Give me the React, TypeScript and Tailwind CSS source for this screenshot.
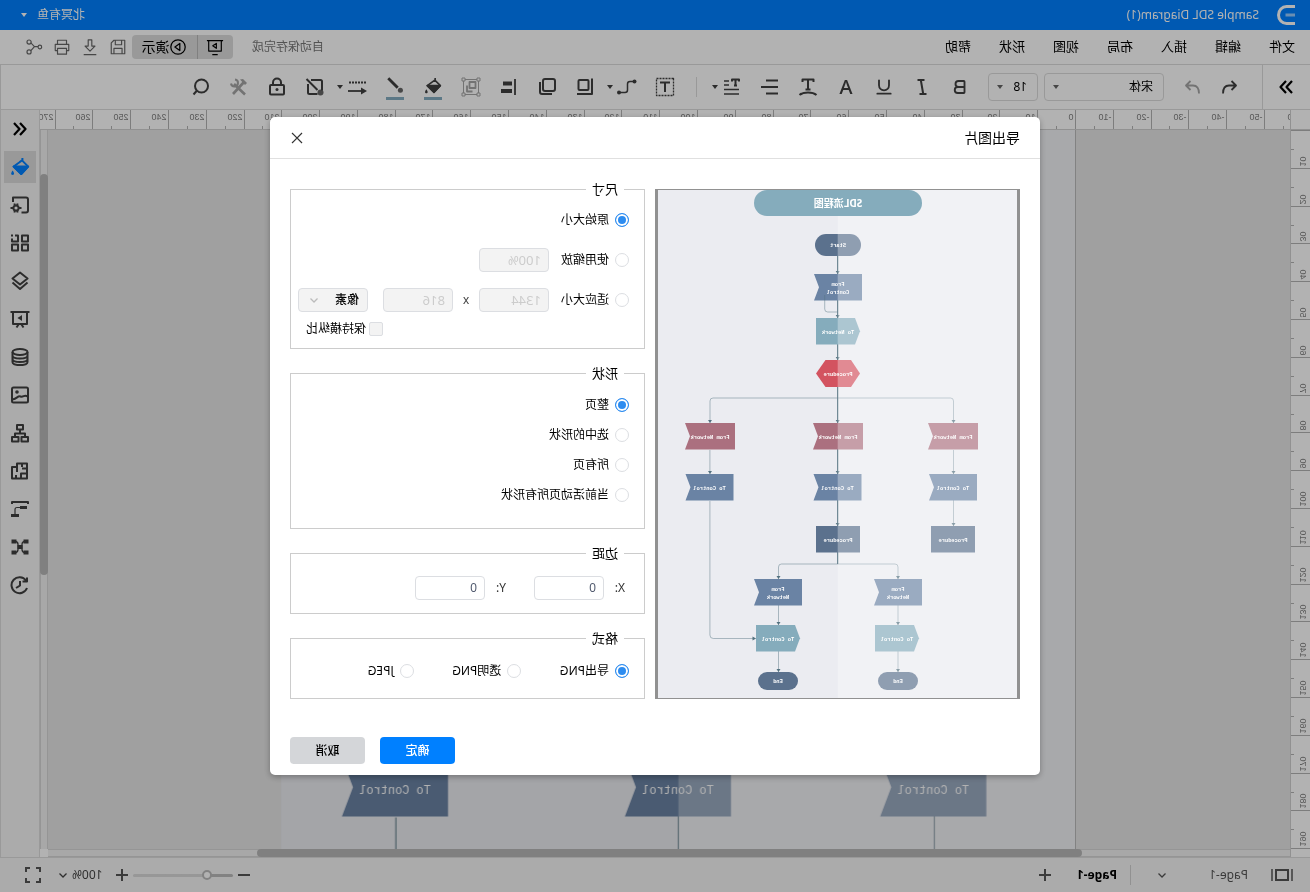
import { useState } from 'react'
import type { ReactNode } from 'react'
import { Bold, Underline } from 'lucide-react'

interface IconProps {
    children: ReactNode
    size?: number
    width?: number
}

function Icon({ children, size = 20, width = 1.8 }: IconProps) {
    return (
        <svg
            width={size}
            height={size}
            viewBox="0 0 20 20"
            fill="none"
            stroke="currentColor"
            strokeWidth={width}
            strokeLinejoin="round"
            aria-hidden="true"
            className="shrink-0"
        >
            {children}
        </svg>
    )
}

function Caret() {
    return (
        <svg width="6" height="4" viewBox="0 0 6 4" className="shrink-0" aria-hidden="true">
            <path d="M0 0h6L3 4z" fill="currentColor" />
        </svg>
    )
}

function Chevron() {
    return (
        <svg width="8" height="5" viewBox="0 0 8 5" fill="none" stroke="currentColor" className="shrink-0" aria-hidden="true">
            <path d="M.5.5 4 4 7.5.5" strokeWidth="1.3" />
        </svg>
    )
}

const bucket = (
    <>
        <path d="M7.6 1v2.6M8 3.4 1.8 9.6l7 7.4 7.6-7.4z" />
        <path d="M2 9.6 8.8 17l7.6-7.4z" fill="currentColor" />
        <path d="M17.4 13.6c2.2 3 1.6 4.4 0 4.4s-2.200-1.400 0-4.400z" fill="currentColor" stroke="none" />
    </>
)

/* ---------- diagram ---------- */

const BLUE = '#6a83a4'
const TEAL = '#85acbc'
const SLATE = '#5b718d'
const ROSE = '#ab707f'

interface NodeProps {
    x: number
    y: number
    w?: number
    text: string[]
    fill: string
}

function NodeText({ x, y, lines }: { x: number; y: number; lines: string[] }) {
    return (
        <>
            {lines.map((line, i) => (
                <text key={line} x={x} y={y + 2.2 + (i - (lines.length - 1) / 2) * 8.4} textAnchor="middle">
                    {line}
                </text>
            ))}
        </>
    )
}

function Flag({ x, y, w = 48, text, fill }: NodeProps) {
    return (
        <g>
            <path d={`M${x} ${y}h${w}l-5 13.3 5 13.300h${-w}z`} fill={fill} />
            <NodeText x={x + w / 2} y={y + 14} lines={text} />
        </g>
    )
}

function Tag({ x, y, w = 44, text, fill }: NodeProps) {
    return (
        <g>
            <path d={`M${x + w} ${y}v26.500h${5 - w}l-5-13.200 5-13.300z`} fill={fill} />
            <NodeText x={x + w / 2} y={y + 14} lines={text} />
        </g>
    )
}

function Box({ x, y, w = 44, text, fill }: NodeProps) {
    return (
        <g>
            <rect x={x} y={y} width={w} height="26.5" fill={fill} />
            <NodeText x={x + w / 2} y={y + 14} lines={text} />
        </g>
    )
}

function Pill({ x, y, w = 40, h = 18, text, fill }: NodeProps & { h?: number }) {
    return (
        <g>
            <rect x={x} y={y} width={w} height={h} rx={h / 2} fill={fill} />
            <NodeText x={x + w / 2} y={y + h / 2} lines={text} />
        </g>
    )
}

const arrows = [
    [179.3, 84], [179.3, 128], [179.3, 170], [307, 233], [179.3, 233], [63.5, 233],
    [307, 284], [179.3, 284], [63.5, 284], [179.3, 336], [63.5, 336],
    [238.5, 389], [119, 389], [238.5, 435], [119, 435], [238.5, 482], [119, 482],
]

function Diagram({ bold = false }: { bold?: boolean }) {
    return (
        <g
            fill="#fff"
            fontSize="5.4"
            fontWeight={bold ? 700 : 400}
            fontFamily="'Liberation Mono', 'Noto Sans CJK SC', monospace"
        >
            <rect width="359" height="508" fill="#ebecf1" />
            <g fill="none" stroke="#53717f" strokeWidth="0.45">
                <path d="M179.300 66v308" strokeWidth={bold ? 1.2 : 0.45} />
                <path d="M63.500 233v-22q0-3 3-3h237.500q3 0 3 3v22" />
                <path d="M307.100 260v24M307.100 311v134q0 3.500-3.500 3.500h-42" />
                <path d="M63.500 260v76M119 389v-12q0-3 3-3h113.500q3 0 3 3v12M119 415v67M238.500 415v67" />
            </g>
            {arrows.map(([x, y]) => (
                <path key={`${x}-${y}`} d={`M${x - 2} ${y - 3}h4l-2 3z`} fill="#53717f" />
            ))}
            <path d="M264.500 446.500v4l-3.500-2z" fill="#53717f" />
            <Pill x={156} y={44} w={46} h={22} text={['Start']} fill={SLATE} />
            <Flag x={155} y={84} text={['From', 'Control']} fill={BLUE} />
            <path d="M179.300 122h10q3 0 3-3v-14" fill="none" stroke="#53717f" strokeWidth="0.45" />
            <Tag x={157} y={128} text={['To Network']} fill={TEAL} />
            <path d="M157 183.500 166 170h25.500l9.500 13.500-9.500 13.500H166z" fill="#d35360" />
            <NodeText x={179} y={184} lines={['Procedure']} />
            <Flag x={282} y={233} w={50} text={['From Network']} fill={ROSE} />
            <Flag x={154} y={233} w={50} text={['From Network']} fill={ROSE} />
            <Flag x={39} y={233} w={50} text={['From Network']} fill={ROSE} />
            <Flag x={283.5} y={284} text={['To Control']} fill={BLUE} />
            <Flag x={155.500} y={284} text={['To Control']} fill={BLUE} />
            <Flag x={40} y={284} text={['To Control']} fill={BLUE} />
            <Box x={157} y={336} text={['Procedure']} fill={SLATE} />
            <Box x={42} y={336} text={['Procedure']} fill={SLATE} />
            <Flag x={215} y={389} text={['From', 'Network']} fill={BLUE} />
            <Flag x={95} y={389} text={['From', 'Network']} fill={BLUE} />
            <Tag x={217} y={435} text={['To Control']} fill={TEAL} />
            <Tag x={98} y={435} text={['To Control']} fill={TEAL} />
            <Pill x={219} y={482} text={['End']} fill={SLATE} />
            <Pill x={99} y={482} text={['End']} fill={SLATE} />
            <rect width="179.300" height="508" fill="#fff" opacity="0.32" />
            <rect x="95" width="168" height="26" rx="13" fill={TEAL} />
            <text x="179" y="17" textAnchor="middle" fontSize="10" fontWeight="700" fontFamily="'Noto Sans', 'Noto Sans CJK SC', sans-serif">
                SDL流程图
            </text>
        </g>
    )
}

/* ---------- rulers ---------- */

const STEP = 37.795
const rulerFont = "'Liberation Sans', sans-serif"

function TopRuler() {
    const marks = Array.from({ length: 34 }, (_, i) => i - 6)
    return (
        <svg className="block h-5 min-w-0 flex-1 border-b border-[#d0d0d0] bg-white" fontSize="9" fontFamily={rulerFont} aria-hidden="true">
            {marks.map((n) => {
                const x = Math.round(214 + n * STEP) + 0.5
                return (
                    <g key={n}>
                        <path d={`M${x} 0v20M${x + 19} 16v4`} stroke="#b4b4b4" />
                        <text x={x + 2} y="10" fill="#808080">{n * 10}</text>
                    </g>
                )
            })}
        </svg>
    )
}

function SideRuler() {
    const marks = Array.from({ length: 20 }, (_, i) => i)
    return (
        <svg className="block h-full w-5 shrink-0 border-r border-[#d0d0d0] bg-white" fontSize="9" fontFamily={rulerFont} aria-hidden="true">
            {marks.map((n) => {
                const y = Math.round(n * STEP) + 0.5
                return (
                    <g key={n}>
                        <path d={`M0 ${y}h20M16 ${y + 19}h4`} stroke="#b4b4b4" />
                        {n > 0 && (
                            <text transform={`translate(10 ${y - 2}) rotate(-90)`} fill="#808080">{n * 10}</text>
                        )}
                    </g>
                )
            })}
        </svg>
    )
}

/* ---------- app chrome ---------- */

const menus = ['文件', '编辑', '插入', '布局', '视图', '形状', '帮助']

function TitleBar() {
    return (
        <header className="flex h-[30px] shrink-0 items-center bg-[#0080ff] pr-[21px] pl-[15px] text-xs text-white">
            <svg width="18" height="20" viewBox="0 0 18 20" fill="none" stroke="#fff" strokeWidth="3" aria-hidden="true">
                <path d="M0 1.500h8.500a8 8.500 0 0 1 0 17H0" />
                <path d="M0 10h9.500" opacity="0.600" />
            </svg>
            <h1 className="ml-[18px] leading-5">Sample SDL Diagram(1)</h1>
            <button className="ml-auto flex items-center gap-[10px]">
                北冥有鱼
                <Caret />
            </button>
        </header>
    )
}

function MenuBar() {
    return (
        <nav className="flex h-[34px] shrink-0 items-center bg-white pl-[15px] text-[13px] text-black">
            <div className="flex gap-7">
                {menus.map((menu) => (
                    <button key={menu}>{menu}</button>
                ))}
            </div>
            <span className="ml-auto text-xs text-[#777]">自动保存完成</span>
            <div className="ml-[19px] flex h-6 items-center overflow-hidden rounded bg-[#dcdcdc]">
                <button aria-label="放映" className="flex h-full w-9 items-center justify-center border-r border-[#b8b8b8]">
                    <Icon size={18} width={1.300}>
                        <path d="M1 3h18M3 3v11.500h14V3M7 18.500h6M8.500 6v5.500l4-2.800z" />
                    </Icon>
                </button>
                <button className="flex h-full w-[65px] items-center justify-center text-sm">
                    <Icon size={18} width={1.400}>
                        <circle cx="10" cy="10" r="8" />
                        <path d="M8 6v8l5.500-4z" />
                    </Icon>
                    演示
                </button>
            </div>
            <div className="flex text-[#666]">
                <button aria-label="保存" className="flex w-7 justify-center">
                    <Icon size={18} width={1.300}>
                        <path d="M2.500 2.500h12l3 3v12h-15zM6 2.500v5h7v-5M5.500 17.500v-6h9v6" />
                    </Icon>
                </button>
                <button aria-label="下载" className="flex w-7 justify-center">
                    <Icon size={18} width={1.300}>
                        <path d="M8 2h4v7h3.500L10 14.500 4.500 9H8zM3 18.500h14" />
                    </Icon>
                </button>
                <button aria-label="打印" className="flex w-7 justify-center">
                    <Icon size={18} width={1.300}>
                        <path d="M5 7V2.500h10V7M5 14H2.500V7h15v7H15M5 11.500h10v6.500H5z" />
                    </Icon>
                </button>
                <button aria-label="分享" className="mr-5 flex w-7 justify-center">
                    <Icon size={18} width={1.300}>
                        <circle cx="3.500" cy="10" r="2" />
                        <circle cx="15.500" cy="4.500" r="2.300" />
                        <circle cx="15.500" cy="15.500" r="2.300" />
                        <path d="M5.500 9.500h4l4-4M9.500 9.500l4 4.500" />
                    </Icon>
                </button>
            </div>
        </nav>
    )
}

interface ToolProps {
    label: string
    children: ReactNode
    muted?: boolean
    more?: boolean
    swatch?: boolean
}

function Tool({ label, children, muted, more, swatch }: ToolProps) {
    return (
        <button
            aria-label={label}
            className={`flex h-8 shrink-0 items-center ${more ? 'w-[42px] gap-1 pl-[9px]' : 'w-[38px] justify-center'} ${muted ? 'text-[#a5a5a5]' : 'text-[#404040]'}`}
        >
            <span className={`flex h-[26px] items-center ${swatch ? 'border-b-3 border-[#85adc0]' : ''}`}>{children}</span>
            {more && <Caret />}
        </button>
    )
}

function Toolbar() {
    return (
        <div className="flex h-[46px] shrink-0 items-center border-y border-r border-[#dcdcdc] bg-white">
            <button aria-label="展开符号库" className="flex h-full w-12 items-center justify-center border-r border-[#dcdcdc] text-black">
                <Icon width={2.200}>
                    <path d="M4 4l5.500 6L4 16M10 4l5.500 6-5.500 6" />
                </Icon>
            </button>
            <div className="ml-[13px] flex items-center">
                <Tool label="撤销">
                    <Icon>
                        <path d="M8.500 4 4 8.500 8.500 13M4 8.500h7c4 0 6 3 6 8" />
                    </Icon>
                </Tool>
                <Tool label="重做" muted>
                    <Icon>
                        <path d="M11.500 4 16 8.500 11.500 13M16 8.500H9c-4 0-6 3-6 8" />
                    </Icon>
                </Tool>
            </div>
            <div className="ml-[9px] flex h-7 w-[120px] items-center rounded-sm border border-[#dcdcdc] pr-2 pl-[10px] text-[#666]">
                <select aria-label="字体" className="min-w-0 flex-1 appearance-none text-xs text-black">
                    <option>宋体</option>
                </select>
                <Caret />
            </div>
            <div className="mr-[9px] ml-[6px] flex h-7 w-[50px] items-center rounded-sm border border-[#dcdcdc] pr-2 pl-[10px] text-[#666]">
                <select aria-label="字号" className="min-w-0 flex-1 appearance-none text-xs text-black">
                    <option>18</option>
                </select>
                <Caret />
            </div>
            <Tool label="加粗"><Bold size={18} strokeWidth={2.500} /></Tool>
            <Tool label="斜体">
                <Icon width={2}>
                    <path d="M7.500 3h7M5.500 17h7M11.200 3 8.800 17" />
                </Icon>
            </Tool>
            <Tool label="下划线"><Underline size={20} strokeWidth={2.200} /></Tool>
            <Tool label="字体颜色"><span className="text-[20px] leading-5 font-medium">A</span></Tool>
            <Tool label="弧形文字">
                <Icon width={2}>
                    <path d="M4.500 5V2.500h11V5M10 2.500v10M7.500 12.500h5M1.500 18c4-3.500 13-3.500 17 0" />
                </Icon>
            </Tool>
            <Tool label="对齐">
                <Icon>
                    <path d="M2 3.500h12M2 10h17M2 16.500h12" />
                </Icon>
            </Tool>
            <Tool label="行距" more>
                <Icon width={1.600}>
                    <path d="M3 4.500V2.500h7v2M6.500 2.500v6M5 8.500h3" strokeWidth="2" />
                    <path d="M13 4h5M13 8h5M3 12.500h15M3 17h15" />
                </Icon>
            </Tool>
            <span className="mx-3 h-5 w-px bg-[#dcdcdc]" />
            <Tool label="文本框">
                <Icon width={1.300}>
                    <rect x="1.500" y="1.500" width="17" height="17" strokeDasharray="2 1" />
                    <path d="M5 5.500h10M10 5.500V15" strokeWidth="2" />
                </Icon>
            </Tool>
            <Tool label="连接线" more>
                <Icon width={1.500}>
                    <path d="M3 4.500h4q2.500 0 2.500 2.500v6q0 2.500 2.500 2.500h5" />
                    <circle cx="2.500" cy="4.500" r="2" fill="currentColor" stroke="none" />
                    <circle cx="18" cy="15.500" r="2" fill="currentColor" stroke="none" />
                </Icon>
            </Tool>
            <Tool label="阴影">
                <Icon width={2}>
                    <rect x="6.500" y="3" width="10" height="10" rx="1" />
                    <path d="M3 1.500V17h15" />
                </Icon>
            </Tool>
            <Tool label="层次">
                <Icon width={2}>
                    <rect x="2" y="2" width="12" height="12" rx="2" />
                    <path d="M17 5v10q0 2-2 2H5" />
                </Icon>
            </Tool>
            <Tool label="对齐形状">
                <Icon>
                    <path d="M4 2v16" />
                    <path d="M7 6.500h9M7 14h11" strokeWidth="4" />
                </Icon>
            </Tool>
            <Tool label="组合" muted>
                <Icon width={1}>
                    <path d="M2.500 2.500h15v15h-15z" />
                    <path d="M1 1h3v3H1zM16 1h3v3h-3zM1 16h3v3H1zM16 16h3v3h-3z" fill="#fff" />
                    <path d="M5.500 5h6v6h-6zM14 8.500v6H8.500" strokeWidth="1.800" />
                </Icon>
            </Tool>
            <Tool label="填充" swatch><Icon size={18}>{bucket}</Icon></Tool>
            <Tool label="线条" swatch>
                <Icon size={18}>
                    <path d="M17.500 1.500 7 12" strokeWidth="3.200" />
                    <circle cx="4" cy="14.800" r="2.800" fill="currentColor" stroke="none" opacity="0.800" />
                </Icon>
            </Tool>
            <Tool label="线型" more>
                <Icon>
                    <path d="M1 5.500h18" strokeDasharray="2 1" />
                    <path d="M3 14h16" />
                    <path d="M0 14l6-3.500v7z" fill="currentColor" stroke="none" />
                </Icon>
            </Tool>
            <Tool label="样式">
                <Icon width={2}>
                    <path d="M14 3H4.500Q3 3 3 4.500v9M7.500 17h8q1.500 0 1.500-1.500V7M18.500 2 7.500 13" />
                    <circle cx="4.500" cy="15.500" r="3" fill="currentColor" stroke="none" opacity="0.800" />
                </Icon>
            </Tool>
            <Tool label="锁定">
                <Icon width={2}>
                    <rect x="3" y="8" width="14" height="9.500" rx="1" />
                    <path d="M6 8V5.500a4 4 0 0 1 8 0V8" />
                    <circle cx="10" cy="12.500" r="1.500" fill="currentColor" stroke="none" />
                </Icon>
            </Tool>
            <Tool label="工具" muted>
                <Icon width={2.600}>
                    <path d="M5 5l11 12M15 7 4 17.500" />
                    <path d="M2 6l4-4 3 .5L4 8z" fill="currentColor" stroke="none" />
                    <path d="M14 2.500a3.500 3.500 0 1 0 4 4" strokeWidth="2" />
                </Icon>
            </Tool>
            <Tool label="查找">
                <Icon width={2}>
                    <circle cx="9.500" cy="9" r="6.500" />
                    <path d="M14 13.500l3.500 4" />
                </Icon>
            </Tool>
        </div>
    )
}

const panels: { label: string; icon: ReactNode }[] = [
    { label: '样式', icon: bucket },
    {
        label: '页面设置',
        icon: (
            <>
                <path d="M8.500 17.500H4q-2 0-2-2V4.500q0-2 2-2h13V7" />
                <circle cx="14" cy="13" r="2.600" />
                <path d="M12.300 8.500l.7 2M15.700 8.500l-.7 2M12.300 17.500l.7-2M15.700 17.500l-.7-2M8.500 13h3M16.500 13h3" />
            </>
        ),
    },
    {
        label: '符号库',
        icon: <path d="M2 2.500h6v6H2zM2 11.500h6v6H2zM12 11.500h6v6h-6zM15 2.500h-3v6h6V5.500M17 2.500h2" />,
    },
    { label: '图层', icon: <path d="M10 1.500l7.500 6-7.500 6-7.500-6zM2.500 11.500 10 18l7.500-6.500" /> },
    {
        label: '演示',
        icon: (
            <>
                <path d="M.5 3h19M3 3v12h14V3M6.500 18.500l2-3M13.500 18.500l-2-3" />
                <path d="M8 6l4.500 3L8 12z" fill="currentColor" stroke="none" />
            </>
        ),
    },
    {
        label: '数据',
        icon: (
            <>
                <ellipse cx="10" cy="5" rx="7.500" ry="3" />
                <path d="M2.500 5v10c0 4 15 4 15 0V5M2.500 8.500c0 4 15 4 15 0M2.500 12c0 4 15 4 15 0" />
            </>
        ),
    },
    {
        label: '图片',
        icon: (
            <>
                <rect x="2" y="2.500" width="16" height="15" rx="1.500" />
                <path d="M2.500 11.500c3-2.500 4 1 7 0s3 2 8 3" />
                <circle cx="13" cy="7" r="1.800" fill="currentColor" stroke="none" />
            </>
        ),
    },
    {
        label: '组织架构',
        icon: <path d="M7 2h6v4.500H7zM2 14h6.500v4.500H2zM11.500 14H18v4.500h-6.500zM10 6.500V10M5 13v-2.500h10V13" />,
    },
    {
        label: '平面图',
        icon: <path d="M3 2.500h10V6h5v11.500H3zM3 7.500h5M8 2.500V6M3 12.500h6v5M13 6v5M14 17.500V14" />,
    },
    {
        label: '甘特图',
        icon: (
            <>
                <path d="M2 5V3h16v2" />
                <path d="M3 8.500h7M11 16.500h8" strokeWidth="3" />
                <path d="M9 8.500h4q2 0 2 2v6" strokeWidth="1.200" />
            </>
        ),
    },
    {
        label: '思维导图',
        icon: (
            <>
                <path d="M1.500 4.500h5M1.500 15.500h5M13.500 4.500h5M13.500 15.500h5M7.500 10h5" strokeWidth="4" />
                <path d="M5 4.500q3 0 3 3v5q0 3-3 3M15 4.500q-3 0-3 3v5q0 3 3 3" strokeWidth="1.300" />
            </>
        ),
    },
    {
        label: '历史记录',
        icon: (
            <>
                <path d="M4 5.500A8 8 0 1 1 3 13M3 2.500v4h4.500" />
                <path d="M10 6v4.500l4 2.500" />
            </>
        ),
    },
]

function SidePanel() {
    return (
        <aside className="flex w-10 shrink-0 flex-col items-center gap-[6px] border-r border-l border-[#dcdcdc] bg-[#f5f5f5] pt-[3px] text-[#404040]">
            <button aria-label="展开面板" className="flex h-8 w-8 items-center justify-center text-black">
                <Icon width={2.200}>
                    <path d="M10 4l-5.500 6L10 16M16 4l-5.500 6L16 16" />
                </Icon>
            </button>
            {panels.map(({ label, icon }, i) => (
                <button
                    key={label}
                    aria-label={label}
                    className={`flex h-8 w-8 items-center justify-center ${i === 0 ? 'bg-[#dcdcdc] text-[#0080ff]' : ''}`}
                >
                    <Icon width={2}>{icon}</Icon>
                </button>
            ))}
        </aside>
    )
}

function Workspace() {
    return (
        <div className="flex min-h-0 flex-1">
            <div className="flex min-w-0 flex-1 flex-col">
                <div className="flex">
                    <div className="h-5 w-5 shrink-0 border-r border-b border-[#d0d0d0] bg-white" />
                    <TopRuler />
                </div>
                <div className="flex min-h-0 flex-1">
                    <SideRuler />
                    <div className="flex min-w-0 flex-1 flex-col">
                        <div className="flex min-h-0 flex-1">
                            <main className="min-w-0 flex-1 overflow-hidden bg-[#e5e5e5] pl-[214px]">
                                <div className="w-[795px] border-l border-[#bbb]">
                                    <svg className="block" width="794" height="1123" viewBox="0 0 359 508">
                                        <Diagram />
                                    </svg>
                                </div>
                            </main>
                            <div className="w-2 shrink-0 border-x border-[#d6d6d6] bg-[#f1f1f1] pt-11">
                                <div className="-mx-px h-[401px] rounded-full bg-[#b8b8b8]" />
                            </div>
                        </div>
                        <div className="mr-2 h-2 shrink-0 border-y border-[#d6d6d6] bg-[#f1f1f1] pl-[208px]">
                            <div className="-my-px h-2 w-[825px] rounded-full bg-[#b8b8b8]" />
                        </div>
                    </div>
                </div>
            </div>
            <SidePanel />
        </div>
    )
}

function StatusBar() {
    const [zoom, setZoom] = useState(23)
    return (
        <footer className="flex h-[35px] shrink-0 items-center border-t border-[#dcdcdc] bg-[#f5f5f5] text-xs text-[#555]">
            <button aria-label="页面列表" className="ml-4">
                <svg width="24" height="14" viewBox="0 0 24 14" fill="none" stroke="currentColor" strokeWidth="2" aria-hidden="true">
                    <path d="M6 2h12v10H6z" />
                    <path d="M2 1v12M22 1v12" strokeWidth="1.500" />
                </svg>
            </button>
            <button className="ml-[22px] flex w-[90px] items-center justify-between">
                Page-1
                <Chevron />
            </button>
            <span className="ml-[27px] h-5 w-px bg-[#d0d0d0]" />
            <button className="ml-[13px] font-bold text-black">Page-1</button>
            <button aria-label="新建页" className="ml-[26px]">
                <svg width="12" height="12" viewBox="0 0 12 12" stroke="currentColor" strokeWidth="2" aria-hidden="true">
                    <path d="M6 0v12M0 6h12" />
                </svg>
            </button>
            <button aria-label="缩小" className="ml-auto">
                <svg width="12" height="12" viewBox="0 0 12 12" stroke="currentColor" strokeWidth="2" aria-hidden="true">
                    <path d="M0 6h12" />
                </svg>
            </button>
            <input
                type="range"
                aria-label="缩放"
                value={zoom}
                onChange={(e) => setZoom(Number(e.target.value))}
                className="mx-[5px] h-[3px] w-[100px] appearance-none rounded-full bg-linear-to-r from-[#bbb] from-26% to-[#d8d8d8] to-26% [&::-webkit-slider-thumb]:h-[10px] [&::-webkit-slider-thumb]:w-[10px] [&::-webkit-slider-thumb]:appearance-none [&::-webkit-slider-thumb]:rounded-full [&::-webkit-slider-thumb]:border-2 [&::-webkit-slider-thumb]:border-[#bbb] [&::-webkit-slider-thumb]:bg-white"
            />
            <button aria-label="放大">
                <svg width="12" height="12" viewBox="0 0 12 12" stroke="currentColor" strokeWidth="2" aria-hidden="true">
                    <path d="M6 0v12M0 6h12" />
                </svg>
            </button>
            <button className="ml-[13px] flex items-center gap-[5px] text-[#444]">
                100%
                <Chevron />
            </button>
            <button aria-label="全屏" className="mr-[25px] ml-[18px]">
                <svg width="16" height="16" viewBox="0 0 16 16" fill="none" stroke="currentColor" strokeWidth="2" aria-hidden="true">
                    <path d="M5 1H1v4M11 1h4v4M5 15H1v-4M11 15h4v-4" />
                </svg>
            </button>
        </footer>
    )
}

/* ---------- export dialog ---------- */

interface RadioProps {
    name: string
    label: string
    value: string
    current: string
    onPick: (value: string) => void
}

function Radio({ name, label, value, current, onPick }: RadioProps) {
    return (
        <label className="flex items-center gap-[6px]">
            <input
                type="radio"
                name={name}
                checked={current === value}
                onChange={() => onPick(value)}
                className="h-[14px] w-[14px] appearance-none rounded-full border border-[#dcdee2] checked:border-[#2d8cf0] checked:bg-[#2d8cf0] checked:shadow-[inset_0_0_0_2px_#fff]"
            />
            {label}
        </label>
    )
}

function Group({ title, children }: { title: string; children: ReactNode }) {
    return (
        <fieldset className="min-w-0 border border-[#ccc] px-[15px] pt-px">
            <legend className="ml-[5px] px-[6px] text-[13px] leading-5">{title}</legend>
            {children}
        </fieldset>
    )
}

const disabledInput = 'h-6 w-[70px] rounded-sm border border-[#dcdee2] bg-[#f3f3f3] px-[7px] text-[13px] text-[#ccc]'
const marginInput = 'h-6 w-[70px] rounded-sm border border-[#dcdee2] px-[7px] text-xs text-[#515a6e]'

function ExportDialog() {
    const [size, setSize] = useState('original')
    const [shape, setShape] = useState('page')
    const [format, setFormat] = useState('png')

    return (
        <div role="dialog" aria-labelledby="export-title" className="w-[770px] rounded-[5px] bg-white text-xs text-black shadow-[0_2px_6px_rgba(0,0,0,0.3)]">
            <div className="flex h-[42px] items-center justify-between border-b border-[#e0e0e0] px-5">
                <h2 id="export-title" className="text-sm">导出图片</h2>
                <button aria-label="关闭" className="mr-px">
                    <svg width="12" height="12" viewBox="0 0 12 12" stroke="#333" strokeWidth="1.200" aria-hidden="true">
                        <path d="M1 1l10 10M11 1 1 11" />
                    </svg>
                </button>
            </div>
            <div className="flex gap-[10px] px-5 pt-5">
                <div className="mt-[10px] mb-px w-[365px] shrink-0 border-x-3 border-y border-[#919191]">
                    <svg className="block h-auto w-full" viewBox="0 0 359 508" role="img" aria-label="预览">
                        <Diagram bold />
                    </svg>
                </div>
                <div className="flex min-w-0 flex-1 flex-col gap-[14px]">
                    <Group title="尺寸">
                        <div className="flex h-10 items-center">
                            <Radio name="size" label="原始大小" value="original" current={size} onPick={setSize} />
                        </div>
                        <div className="flex h-10 items-center gap-3">
                            <Radio name="size" label="使用缩放" value="scale" current={size} onPick={setSize} />
                            <input disabled aria-label="缩放比例" defaultValue="100%" className={disabledInput} />
                        </div>
                        <div className="-mr-2 flex h-10 items-center">
                            <Radio name="size" label="适应大小" value="fit" current={size} onPick={setSize} />
                            <input disabled aria-label="宽度" defaultValue="1344" className={`ml-3 ${disabledInput}`} />
                            <span className="w-[26px] text-center text-[#444]">x</span>
                            <input disabled aria-label="高度" defaultValue="816" className={disabledInput} />
                            <div className="ml-auto flex h-6 w-[70px] shrink-0 items-center rounded-sm border border-[#dcdee2] bg-[#f3f3f3] pr-[11px] pl-2 text-[#bbb]">
                                <select aria-label="单位" className="min-w-0 flex-1 appearance-none font-medium text-black">
                                    <option>像素</option>
                                </select>
                                <Chevron />
                            </div>
                        </div>
                        <label className="mb-[10px] flex h-[18px] items-center gap-[3px] pl-[246px]">
                            <input type="checkbox" disabled className="h-[14px] w-[14px] appearance-none rounded-xs border border-[#dcdee2] bg-[#f3f3f3]" />
                            保持横纵比
                        </label>
                    </Group>
                    <Group title="形状">
                        <div className="flex flex-col pt-[6px] pb-[18px]">
                            {[
                                ['page', '整页'],
                                ['selected', '选中的形状'],
                                ['all', '所有页'],
                                ['active', '当前活动页所有形状'],
                            ].map(([value, label]) => (
                                <div key={value} className="flex h-[30px] items-center">
                                    <Radio name="shape" label={label} value={value} current={shape} onPick={setShape} />
                                </div>
                            ))}
                        </div>
                    </Group>
                    <Group title="边距">
                        <div className="flex h-[49px] items-center gap-7 pb-[2px] pl-1 text-[#333]">
                            <label className="flex items-center">
                                <span className="w-[21px]">X:</span>
                                <input defaultValue="0" className={marginInput} />
                            </label>
                            <label className="flex items-center">
                                <span className="w-[21px]">Y:</span>
                                <input defaultValue="0" className={marginInput} />
                            </label>
                        </div>
                    </Group>
                    <Group title="格式">
                        <div className="flex h-[49px] items-center pb-[6px]">
                            {[
                                ['png', '导出PNG'],
                                ['alpha', '透明PNG'],
                                ['jpeg', 'JPEG'],
                            ].map(([value, label]) => (
                                <div key={value} className="w-[109px]">
                                    <Radio name="format" label={label} value={value} current={format} onPick={setFormat} />
                                </div>
                            ))}
                        </div>
                    </Group>
                </div>
            </div>
            <div className="flex justify-end gap-[15px] px-5 pt-[37px] pb-[11px] font-medium">
                <button className="h-[27px] w-[75px] rounded-sm bg-[#0080ff] text-white">确定</button>
                <button className="h-[27px] w-[75px] rounded-sm bg-[#d4d6d9]">取消</button>
            </div>
        </div>
    )
}

export default function App() {
    return (
        <div className="relative flex h-screen -scale-x-100 flex-col overflow-hidden font-['Noto_Sans','Noto_Sans_CJK_SC',sans-serif]">
            <TitleBar />
            <MenuBar />
            <Toolbar />
            <Workspace />
            <StatusBar />
            <div className="absolute inset-0 flex items-center justify-center bg-black/30">
                <ExportDialog />
            </div>
        </div>
    )
}
